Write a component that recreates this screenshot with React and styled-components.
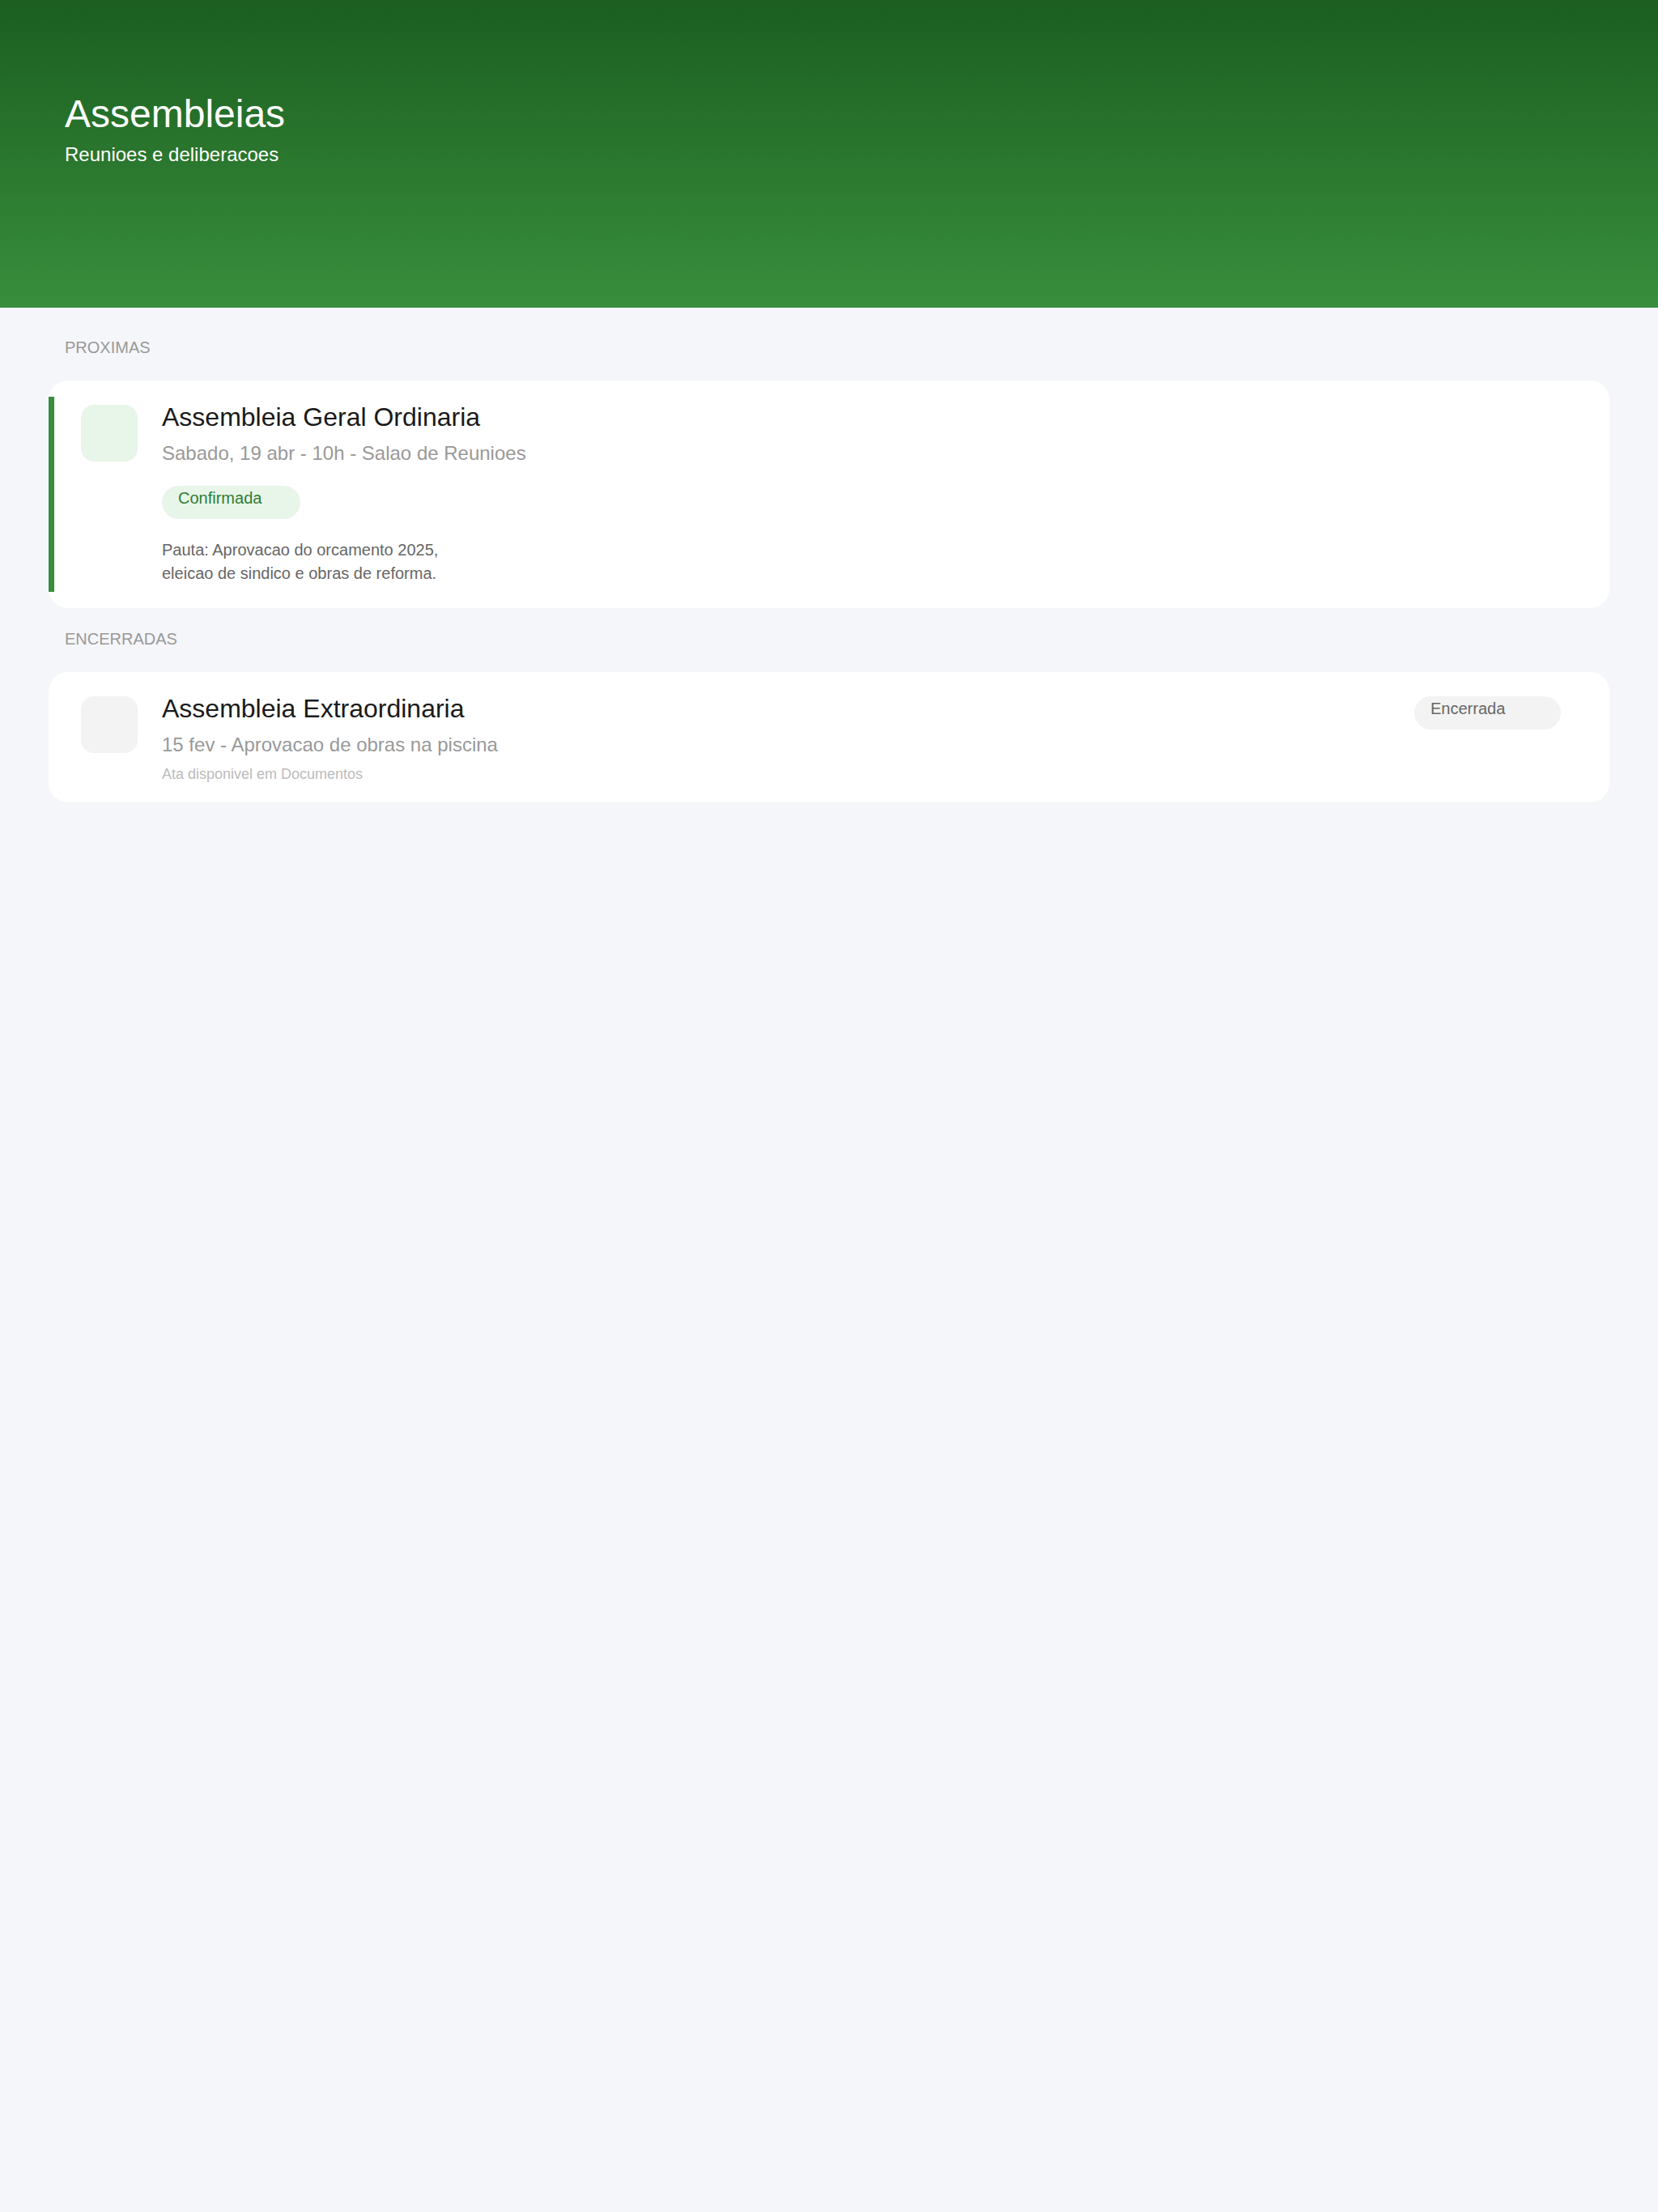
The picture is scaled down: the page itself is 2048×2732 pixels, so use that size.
import React from "react";
import styled, { createGlobalStyle } from "styled-components";

const Assembleias = () => {
  return (
    <>
      <GlobalStyle />
      <Page>
        <Hero>
          <HeroTitle>Assembleias</HeroTitle>
          <HeroSubtitle>Reunioes e deliberacoes</HeroSubtitle>
        </Hero>

        <Content>
          <SectionLabel>PROXIMAS</SectionLabel>
          <Card $accent>
            <IconTile $tone="green" />
            <Body>
              <Title>Assembleia Geral Ordinaria</Title>
              <Meta>Sabado, 19 abr - 10h - Salao de Reunioes</Meta>
              <Badge $tone="green" $width={171}>
                Confirmada
              </Badge>
              <Agenda>
                Pauta: Aprovacao do orcamento 2025, eleicao de sindico e obras
                de reforma.
              </Agenda>
            </Body>
          </Card>

          <SectionLabel $spaced>ENCERRADAS</SectionLabel>
          <Card>
            <IconTile $tone="grey" />
            <Body>
              <Title>Assembleia Extraordinaria</Title>
              <Meta>15 fev - Aprovacao de obras na piscina</Meta>
              <Note>Ata disponivel em Documentos</Note>
            </Body>
            <Badge $tone="grey" $width={181} $side>
              Encerrada
            </Badge>
          </Card>
        </Content>
      </Page>
    </>
  );
};

// Styles ****************************************
const GlobalStyle = createGlobalStyle`
  body {
    margin: 0;
    background: #f5f6fa;
    font-family: "Liberation Sans", Arial, sans-serif;
  }
`;

const tones = {
  green: { bg: "#e8f5e9", fg: "#2e7d32" },
  grey: { bg: "#f3f3f3", fg: "#666666" },
};

const Page = styled.div`
  min-height: 100vh;
  background: #f5f6fa;
`;

const Hero = styled.header`
  box-sizing: border-box;
  height: 380px;
  padding: 112px 80px 0;
  background: linear-gradient(180deg, #1b5e20 0%, #388e3c 100%);
  color: #fff;
`;

const HeroTitle = styled.h1`
  margin: 0;
  font-size: 48px;
  font-weight: 400;
  line-height: 1.2;
`;

const HeroSubtitle = styled.p`
  margin: 4px 0 0;
  font-size: 24px;
  line-height: 1.4;
`;

const Content = styled.main`
  padding: 37px 60px;
`;

const SectionLabel = styled.h2`
  margin: ${(p) => (p.$spaced ? "26px" : "0")} 0 29px 20px;
  font-size: 20px;
  font-weight: 400;
  line-height: 24px;
  color: #999;
`;

const Card = styled.section`
  position: relative;
  display: flex;
  align-items: flex-start;
  gap: 30px;
  padding: 26px 40px 23px;
  background: #fff;
  border-radius: 24px;

  &::before {
    content: "";
    display: ${(p) => (p.$accent ? "block" : "none")};
    position: absolute;
    left: 0;
    top: 20px;
    bottom: 20px;
    width: 7px;
    background: #388e3c;
  }
`;

const IconTile = styled.div`
  flex: none;
  width: 70px;
  height: 70px;
  margin-top: 4px;
  border-radius: 16px;
  background: ${(p) => tones[p.$tone].bg};
`;

const Body = styled.div`
  flex: 1;
  display: flex;
  flex-direction: column;
  align-items: flex-start;
`;

const Title = styled.h3`
  margin: 0;
  font-size: 32px;
  font-weight: 400;
  line-height: 1.2;
  color: #1a1a1a;
`;

const Meta = styled.p`
  margin: 9px 0 0;
  font-size: 24px;
  line-height: 1.4;
  color: #999;
`;

const Badge = styled.span`
  box-sizing: border-box;
  flex: none;
  width: ${(p) => p.$width}px;
  height: 41px;
  margin: ${(p) => (p.$side ? "4px 20px 0 0" : "23px 0 0")};
  padding: 4px 20px 0;
  border-radius: 21px;
  font-size: 20px;
  background: ${(p) => tones[p.$tone].bg};
  color: ${(p) => tones[p.$tone].fg};
`;

const Agenda = styled.p`
  max-width: 360px;
  margin: 24px 0 5px;
  font-size: 20px;
  line-height: 29px;
  color: #666;
`;

const Note = styled.p`
  margin: 9px 0 0;
  font-size: 18px;
  line-height: 1.2;
  color: #bbb;
`;

export default Assembleias;
